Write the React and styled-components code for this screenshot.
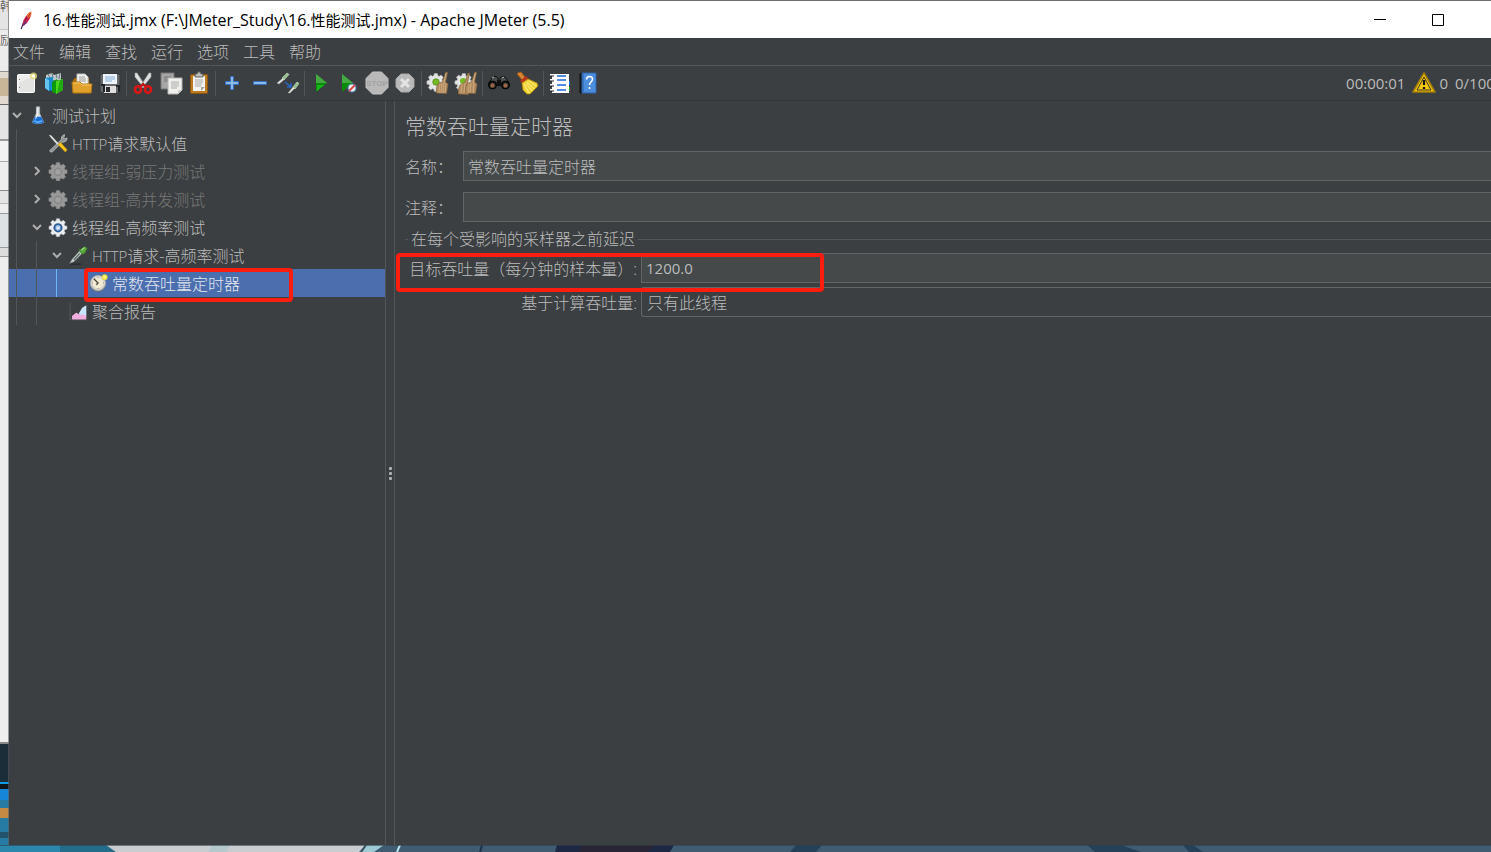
import React, { useState } from 'react';
import styled, { createGlobalStyle } from 'styled-components';

const menus = ['文件', '编辑', '查找', '运行', '选项', '工具', '帮助'];

const treeNodes = [
  { depth: 0, icon: 'flask', label: '测试计划', state: 'open' },
  { depth: 1, icon: 'tools', latin: 'HTTP', label: '请求默认值' },
  { depth: 1, icon: 'gearOff', label: '线程组-弱压力测试', state: 'closed', disabled: true },
  { depth: 1, icon: 'gearOff', label: '线程组-高并发测试', state: 'closed', disabled: true },
  { depth: 1, icon: 'gear', label: '线程组-高频率测试', state: 'open' },
  { depth: 2, icon: 'dropper', latin: 'HTTP', label: '请求-高频率测试', state: 'open' },
  { depth: 3, icon: 'timer', label: '常数吞吐量定时器', marked: true },
  { depth: 2, icon: 'chart', label: '聚合报告' },
];

const toolGroups = [
  [['new', '新建'], ['templates', '模板'], ['open', '打开'], ['save', '保存']],
  [['cut', '剪切'], ['copy', '复制'], ['paste', '粘贴']],
  [['plus', '展开'], ['minus', '折叠'], ['toggle', '切换']],
  [['start', '启动'], ['startNoPause', '不停顿开始'], ['stop', '停止'], ['shutdown', '关闭']],
  [['clear', '清除'], ['clearAll', '清除全部']],
  [['search', '搜索'], ['reset', '重置搜索']],
  [['functions', '函数助手'], ['help', '帮助']],
];

const gearPath =
  'M10.2 2h3.6l.6 2.6 1.7.7 2.3-1.4 2.5 2.5-1.4 2.3.7 1.7 2.6.6v3.6l-2.6.6-.7 1.7 1.4 2.3-2.5 2.5-2.3-1.4-1.7.7-.6 2.6h-3.6l-.6-2.6-1.7-.7-2.3 1.4-2.5-2.5 1.4-2.3-.7-1.7-2.6-.6V11l2.6-.6.7-1.7-1.4-2.3 2.5-2.5 2.3 1.4 1.7-.7z';

const brushPath = 'M19 1l1.6.5-2 9.5 2.4 2-1.5 9.500-10-.5q-1-5 1.500-9l4.500-2.500z';

const drawings = {
  new: (
    <>
      <rect x="3.5" y="3.5" width="17" height="18" rx="1" fill="#eeeeec" stroke="#fff" />
      <path d="M5 12v9h15V5z" fill="#dcdcda" opacity=".6" />
      <path d="M5.5 8v1M5.5 16v1" stroke="#777" />
      <circle cx="19.5" cy="5" r="3.5" fill="#e6d978" opacity=".8" />
      <circle cx="19.5" cy="5" r="1.8" fill="#fffce0" />
    </>
  ),
  templates: (
    <>
      <path d="M4 4l6-2 2 2 7-2v7L4 10z" fill="#bfc9cc" />
      <path d="M6 3l2 4M10 2l1 5M14 3l1 4M18 2l-1 6" stroke="#66777d" />
      <path d="M3 7l8-1v13l-4 1-4-3z" fill="#178bcb" />
      <path d="M3 7l4 2v11l-4-3z" fill="#65c4ef" />
      <path d="M10 11l5-3v15l-5-2z" fill="#0c9a0c" />
      <path d="M14 10l7-2v11l-7 4z" fill="#49d718" />
      <path d="M18 9l3-1v11l-6 3z" fill="#22aa12" />
    </>
  ),
  open: (
    <>
      <path d="M3 9l2-2h14l1 14H4z" fill="#a86c09" />
      <path d="M7 3h8l3 3v8H7z" fill="#f2f2f0" stroke="#c3c3c3" />
      <path d="M9 6h6M9 8h7M9 10h7" stroke="#999" />
      <path d="M2 11h8l2 2h10l-1 9H3z" fill="#e0a12d" stroke="#b67711" />
      <path d="M3 12h7l2 2h9" fill="none" stroke="#f5c868" />
    </>
  ),
  save: (
    <>
      <path d="M3 3h18l1 1v18H4l-2-2V4z" fill="#666a6c" stroke="#32373a" />
      <path d="M5 3h14v10H5z" fill="#edf4fb" />
      <path d="M7 6h10M7 8h10M7 10h7" stroke="#82add8" />
      <path d="M6 15h12v7H6z" fill="#dfdfdf" />
      <path d="M8 16h4v5H8z" fill="#292c2e" />
      <path d="M3 14h3v7M18 15h3v6" fill="none" stroke="#202325" strokeWidth="2" />
    </>
  ),
  cut: (
    <>
      <path d="M4 2h2l9 14-2 1L4 6zM20 2h-2L9 16l2 1 9-11z" fill="#dfe1e1" stroke="#a3a5a5" strokeWidth=".6" />
      <ellipse cx="7" cy="18.5" rx="3" ry="3.2" fill="none" stroke="#dc1515" strokeWidth="2.6" />
      <ellipse cx="17" cy="18.5" rx="3" ry="3.2" fill="none" stroke="#dc1515" strokeWidth="2.6" />
      <path d="M9 16l3-3 3 3" fill="none" stroke="#c51010" strokeWidth="2" />
    </>
  ),
  copy: (
    <>
      <path d="M2 2h13v16H2z" fill="#a5a6a5" stroke="#777" />
      <path d="M5 6h7M5 8h7M5 10h7" stroke="#777" />
      <path d="M9 7h14v12l-4 4H9z" fill="#f0f0ee" stroke="#b4b4b1" />
      <path d="M12 11h8M12 13h8M12 15h8M12 17h6" stroke="#aaa" />
      <path d="M19 23v-4h4z" fill="#cfcfcc" />
    </>
  ),
  paste: (
    <>
      <rect x="3.5" y="3.5" width="17" height="19" rx="1" fill="#bc7b20" stroke="#895510" />
      <path d="M6 5h12v15H6z" fill="#f2f2f0" />
      <path d="M8 9h8M8 11h8M8 13h7M8 15h6" stroke="#aaa" />
      <path d="M14 20l4-4h-4z" fill="#a6a6a3" />
      <path d="M8 3h2l1-2h2l1 2h2v3H8z" fill="#bbbdb8" stroke="#62645f" />
    </>
  ),
  plus: <path d="M10.5 5.5h3v5h5v3h-5v5h-3v-5h-5v-3h5z" fill="#8db9ea" stroke="#3470be" />,
  minus: <path d="M5.5 10.5h13v3h-13z" fill="#8db9ea" stroke="#3470be" />,
  toggle: (
    <>
      <path d="M1 12l6-5 2 1-6 5zM12 22l5-6 2 1-5 5z" fill="#e4e6e4" stroke="#9a9c9a" strokeWidth=".5" />
      <path d="M6 7l5-5 2 1.500-5 5.500zM17 16l4-5 2 1.500-4 5.500z" fill="#93bf8b" stroke="#d1e6ce" strokeWidth=".6" />
      <path d="M9 11l5 4M15 12v4h-4" fill="none" stroke="#2767c3" strokeWidth="1.6" />
    </>
  ),
  start: (
    <>
      <path d="M7 3l11 9-11 9z" fill="#0b8b0b" />
      <path d="M7 3l11 9H7z" fill="#44a943" />
      <path d="M8 14h7l-7 6z" fill="#15b815" />
    </>
  ),
  startNoPause: (
    <>
      <path d="M5 3l11 9-11 9z" fill="#0b8b0b" />
      <path d="M5 3l11 9H5z" fill="#44a943" />
      <circle cx="15" cy="17" r="4" fill="#eee" stroke="#5481b1" strokeWidth="1.2" />
      <path d="M12 20l6-6" stroke="#d64444" strokeWidth="1.8" />
    </>
  ),
  stop: (
    <>
      <path d="M7.5 1h9L23 7.5v9L16.5 23h-9L1 16.5v-9z" fill="#b9b9b9" stroke="#c4c4c4" />
      <text x="12" y="15" textAnchor="middle" fontFamily="Liberation Sans" fontSize="8" fontWeight="700" fill="#a2a2a2">STOP</text>
    </>
  ),
  shutdown: (
    <>
      <path d="M8 3h8l5 5v8l-5 5H8l-5-5V8z" fill="#b9b9b9" stroke="#a9a9a9" />
      <path d="M8 8l8 8M16 8l-8 8" stroke="#e4e4e4" strokeWidth="3" />
    </>
  ),
  clear: (
    <>
      <path d={gearPath} transform="translate(0 1) scale(.82)" fill="#e4e5e5" stroke="#bbb" />
      <circle cx="10" cy="11" r="3.2" fill="#73ba25" stroke="#5c941f" />
      <path d={brushPath} transform="translate(1 0)" fill="#b08a5e" stroke="#86643c" strokeWidth=".6" />
      <path d="M14 13l-1 9M16 12l-1 10M18 12l-1 10M20 13l-1 9M20 2l-2 10" stroke="#d9b98c" strokeWidth=".7" />
    </>
  ),
  clearAll: (
    <>
      <path d={gearPath} transform="translate(0 1) scale(.82)" fill="#e4e5e5" stroke="#bbb" />
      <circle cx="9" cy="10" r="3" fill="#73ba25" />
      <path d={brushPath} transform="translate(-5 1)" fill="#b08a5e" stroke="#86643c" strokeWidth=".6" />
      <path d={brushPath} transform="translate(2 0)" fill="#b08a5e" stroke="#86643c" strokeWidth=".6" />
      <path d="M8 13l-1 9M11 12l-1 10M15 13l-1 9M17 12l-1 10M20 12l-1 10M21 2l-2 10" stroke="#d9b98c" strokeWidth=".7" />
    </>
  ),
  search: (
    <>
      <path d="M5 7l3-2 3 2v5H2zM13 7l3-2 3 2 3 5h-9z" fill="#4c4e4e" stroke="#111" />
      <path d="M10 9h4v6h-4z" fill="#111" />
      <circle cx="5.5" cy="14" r="4" fill="#17191a" stroke="#000" />
      <circle cx="18.5" cy="14" r="4" fill="#17191a" stroke="#000" />
      <circle cx="5.5" cy="14.5" r="2.2" fill="#9a6649" />
      <circle cx="18.5" cy="14.5" r="2.2" fill="#9a6649" />
      <path d="M5 7l2-1M15 7l2-1" stroke="#bbb" />
    </>
  ),
  reset: (
    <>
      <path d="M2 3q1-2 4-2l4 5-3 3z" fill="#d58433" stroke="#9a5313" />
      <path d="M5 10l6-5 3 3-6 5z" fill="#b5341f" />
      <path d="M7 12l6-4 9 4 1 3-8 8h-3l-4-4z" fill="#f0d238" stroke="#b38e08" strokeWidth=".8" />
      <path d="M9 13l5 9M11 12l6 8M12 11l7 7M14 10l7 5" stroke="#fff184" />
    </>
  ),
  functions: (
    <>
      <path d="M4 3h17v19H4z" fill="#fff" />
      <path d="M2 4h5M2 9h5M2 14h5M2 19h5" stroke="#f7f7f7" strokeWidth="2" />
      <path d="M2 5h4M2 10h4M2 15h4M2 20h4" stroke="#222" />
      <path d="M9 5h9M9 9h9M9 14h9M9 19h9" stroke="#1c67d8" strokeWidth="1.4" />
      <path d="M21 10h1v4h-1z" fill="#1b74dc" />
      <path d="M21 16h1v4h-1z" fill="#29a529" />
    </>
  ),
  help: (
    <>
      <path d="M4 3l2-1v20H4z" fill="#101820" stroke="#111" />
      <path d="M6 2h14v20H6z" fill="#4c8ddd" stroke="#2e65aa" />
      <path d="M7 3v18" stroke="#2862a8" />
      <path d="M10.5 8.5c0-4 6-4 6-.5 0 3-3 3-3 6" fill="none" stroke="#fff" strokeWidth="1.5" />
      <circle cx="13.5" cy="17" r="1" fill="#fff" />
    </>
  ),
  flask: (
    <>
      <path d="M10 2h4v8l5 11q-7 3-14 0l5-11z" fill="#d6dcde" stroke="#a9b5bb" strokeWidth=".6" />
      <path d="M8 14h8l3 7q-7 3-14 0z" fill="#176fd4" />
      <path d="M7 19q5 3 10 0" stroke="#5caaf8" strokeWidth="2" fill="none" />
      <path d="M11 4v8l-2 5" stroke="#fff" fill="none" />
    </>
  ),
  tools: (
    <>
      <path d="M2 21L16 8q-1-4 3-6h1l-1 4 1 1 3-1q0 4-4 5h-2L5 23q-3 0-3-2" fill="#8f9495" stroke="#c7cbcc" strokeWidth=".8" />
      <path d="M1 2l3 1 9 10-2 1L3 5z" fill="#ddd" />
      <path d="M12 14l3-3 8 9-2 3z" fill="#f8c51c" stroke="#a97809" strokeWidth=".5" />
    </>
  ),
  gear: (
    <>
      <path d={gearPath} fill="#ecedee" stroke="#aeb4bd" strokeWidth=".7" />
      <circle cx="12" cy="13" r="5.5" fill="#315e97" />
      <path d="M9 11a4 4 0 0 1 6 0v4a4 4 0 0 1-6 0z" fill="#93bce6" />
      <circle cx="12" cy="13" r="2" fill="#dcecf8" />
    </>
  ),
  gearOff: (
    <>
      <path d={gearPath} fill="#989898" stroke="#8b8b8b" />
      <circle cx="12" cy="13" r="5" fill="#858585" />
      <circle cx="12" cy="13" r="3.5" fill="#a1a1a1" />
    </>
  ),
  dropper: (
    <>
      <path d="M3 23h13" stroke="#292d2f" strokeWidth="2" />
      <path d="M2 22l3-5L14 7l3 3L7 20z" fill="#cfd6d2" stroke="#77827c" strokeWidth=".7" />
      <path d="M7 18l7-8" stroke="#59655e" strokeWidth="1.5" />
      <path d="M13 6l3-1 4-3 3 2-3 6-3 1z" fill="#58a83d" stroke="#3c792c" />
      <path d="M16 6l4-3" stroke="#9bdc7c" strokeWidth="1.5" />
    </>
  ),
  timer: (
    <>
      <circle cx="12" cy="13" r="9.5" fill="#74787a" />
      <circle cx="12" cy="12" r="9" fill="#d6d5cf" stroke="#b3b3ae" />
      <circle cx="12" cy="12" r="6.5" fill="#f0ead2" />
      <path d="M7 7l5 5-2 2" stroke="#474738" strokeWidth="1.6" fill="none" />
      <path d="M12 5v1M18 12h1M12 18v1M5 12h1" stroke="#77776c" />
      <circle cx="20" cy="5" r="3.5" fill="#e6da40" />
      <circle cx="20" cy="5" r="2" fill="#fff678" />
    </>
  ),
  chart: (
    <>
      <path d="M2.5 2v20.5h20" stroke="#5d6063" fill="none" />
      <path d="M5 22v-4l5-4 3 2 4-6 4-3v15z" fill="#f1a9d7" />
      <path d="M13 15l4-7 5-3v13l-4 3z" fill="#c9e4fa" />
      <path d="M5 18l5-4 4 4 3-2 5 2v4H5z" fill="#efaedd" />
    </>
  ),
  warning: (
    <>
      <path d="M12 2l11 19H1z" fill="#f2c60d" stroke="#a78109" strokeWidth="1.5" strokeLinejoin="round" />
      <path d="M12 6l7 13H5z" fill="none" stroke="#3d3920" />
      <path d="M12 9v5M12 16v2" stroke="#16130a" strokeWidth="2.2" />
    </>
  ),
  feather: (
    <>
      <path d="M5 23q2-7 5-12" stroke="#4c2f65" strokeWidth="1.5" fill="none" />
      <path d="M7 18q0-7 5-12 3-4 5-4 1 4-2 9-3 5-7 8z" fill="#c92050" />
      <path d="M12 6q3-4 5-4 1 3-1 6l-4 2z" fill="#f17424" />
      <path d="M7 18l2-4 3 1-4 4z" fill="#6e3a8c" />
      <path d="M8 18q2-7 8-14" stroke="#761942" fill="none" strokeWidth=".8" />
    </>
  ),
};

const Icon = ({ name, size = 24 }) => (
  <svg width={size} height={size} viewBox="0 0 24 24" aria-hidden="true">
    {drawings[name]}
  </svg>
);

const Chevron = ({ state }) => (
  <svg width="10" height="10" viewBox="0 0 10 10" aria-hidden="true">
    <path d={state === 'open' ? 'M1 3l4 4 4-4' : 'M3 1l4 4-4 4'} fill="none" stroke="#adadad" strokeWidth="2" />
  </svg>
);

const Wallpaper = () => (
  <WallpaperSvg viewBox="0 0 1491 7" preserveAspectRatio="none" aria-hidden="true">
    <rect width="1491" height="7" fill="#3f5c73" />
    <path d="M0 0h106l10 7H0z" fill="#2b87ab" />
    <path d="M60 0h46l10 7H60z" fill="#246d8a" />
    <path d="M106 0h260l-7 7H116z" fill="#c9cdcf" />
    <path d="M212 0h18l-4 7h-18z" fill="#b5c9cc" />
    <path d="M366 0h18l-10 7h-14z" fill="#9ccbd4" />
    <path d="M366 0l-5 7" stroke="#35505f" strokeWidth="2" />
    <path d="M400 0l-3 7" stroke="#b9e5ec" strokeWidth="2" />
    <path d="M482 0l-2 7" stroke="#1f3348" strokeWidth="2" />
    <path d="M557 0h117l-4 7H555z" fill="#1d2944" />
    <path d="M582 0h75l-10 7h-68z" fill="#292536" />
    <path d="M796 0h26l-6 7h-26zM1087 0h34l20 7h-46zM1183 0h10l10 7h-14z" fill="#25415a" />
    <path d="M0 .5h1491" stroke="#2f3f4a" opacity=".6" />
  </WallpaperSvg>
);

const TreeRow = ({ node, selected, onSelect }) => (
  <Row role="treeitem" aria-selected={selected} $selected={selected} onClick={onSelect}>
    {Array.from({ length: node.depth }, (_, i) => (
      <Guide key={i} $active={selected && i === node.depth - 1} />
    ))}
    <Toggle>{node.state && <Chevron state={node.state} />}</Toggle>
    <Icon name={node.icon} size={20} />
    <NodeLabel $disabled={node.disabled}>
      {node.latin && <Latin>{node.latin}</Latin>}
      {node.label}
    </NodeLabel>
    {node.marked && <NodeMark />}
  </Row>
);

const App = () => {
  const [selected, setSelected] = useState(6);
  const [name, setName] = useState('常数吞吐量定时器');
  const [comment, setComment] = useState('');
  const [throughput, setThroughput] = useState('1200.0');

  return (
    <Desktop>
      <GlobalStyle />
      <Backdrop>
        <BackdropText>韩</BackdropText>
        <BackdropText>励</BackdropText>
      </Backdrop>
      <Window>
        <TitleBar>
          <Icon name="feather" size={20} />
          <WindowTitle>
            16.<Cjk>性能测试</Cjk>.jmx (F:\JMeter_Study\16.<Cjk>性能测试</Cjk>.jmx) - Apache JMeter (5.5)
          </WindowTitle>
          <WindowButton aria-label="最小化">
            <svg width="12" height="12" viewBox="0 0 12 12"><path d="M0 5.5h12" stroke="#000" /></svg>
          </WindowButton>
          <WindowButton aria-label="最大化">
            <svg width="12" height="12" viewBox="0 0 12 12"><path d="M.5.5h11v11H.5z" fill="none" stroke="#000" /></svg>
          </WindowButton>
        </TitleBar>

        <MenuBar>
          {menus.map((menu) => (
            <MenuButton key={menu}>{menu}</MenuButton>
          ))}
        </MenuBar>

        <Toolbar>
          {toolGroups.map((group, index) => (
            <ToolGroup key={index}>
              {group.map(([icon, label]) => (
                <ToolButton key={icon} aria-label={label}>
                  <Icon name={icon} />
                </ToolButton>
              ))}
            </ToolGroup>
          ))}
          <Status>
            <span>00:00:01</span>
            <Icon name="warning" />
            <ErrorCount>0</ErrorCount>
            <ThreadCount>0/100</ThreadCount>
          </Status>
        </Toolbar>

        <Workspace>
          <Tree role="tree">
            {treeNodes.map((node, index) => (
              <TreeRow
                key={index}
                node={node}
                selected={selected === index}
                onSelect={() => setSelected(index)}
              />
            ))}
          </Tree>
          <Splitter>
            <Dot />
            <Dot />
            <Dot />
          </Splitter>
          <Editor>
            <Heading>常数吞吐量定时器</Heading>
            <Field>
              <FieldLabel htmlFor="name">名称：</FieldLabel>
              <TextInput id="name" value={name} onChange={(e) => setName(e.target.value)} />
            </Field>
            <Field>
              <FieldLabel htmlFor="comment">注释：</FieldLabel>
              <TextInput id="comment" value={comment} onChange={(e) => setComment(e.target.value)} />
            </Field>
            <GroupTitle>在每个受影响的采样器之前延迟</GroupTitle>
            <Settings>
              <SettingLabel htmlFor="throughput">目标吞吐量（每分钟的样本量）:</SettingLabel>
              <NumberInput id="throughput" value={throughput} onChange={(e) => setThroughput(e.target.value)} />
              <SettingLabel htmlFor="mode">基于计算吞吐量:</SettingLabel>
              <Select id="mode">
                <option>只有此线程</option>
              </Select>
              <SettingMark />
            </Settings>
          </Editor>
        </Workspace>
      </Window>
      <Wallpaper />
    </Desktop>
  );
};

// Styled Components
const GlobalStyle = createGlobalStyle`
  * {
    box-sizing: border-box;
  }
  body {
    margin: 0;
    overflow: hidden;
    font-family: 'Open Sans', 'Noto Sans CJK SC', sans-serif;
    font-size: 16px;
    font-weight: 300;
    color: #bbbbbb;
  }
  button, input, select {
    font: inherit;
    color: inherit;
  }
  svg {
    display: block;
    flex-shrink: 0;
  }
`;

const Desktop = styled.div`
  display: grid;
  grid-template-columns: 9px minmax(0, 1fr);
  grid-template-rows: minmax(0, 1fr) 7px;
  height: 100vh;
`;

const Backdrop = styled.div`
  display: flex;
  flex-direction: column;
  gap: 20px;
  overflow: hidden;
  border-right: 1px solid rgba(90, 94, 98, 0.6);
  background: linear-gradient(
    #e4e4e4 0 29px, #c5c5c5 29px 30px, #ececec 30px 71px, #8f8f8f 71px 72px,
    #e0dad0 72px 78px, #c9b698 78px 96px, #e0dad0 96px 104px, #666 104px 105px,
    #e4e4e4 105px 139px, #999 139px 141px, #f2f2f2 141px 161px, #aaa 161px 162px,
    #eee 162px 190px, #888 190px 191px, #e4e4e4 191px 203px, #bbb 203px 204px,
    #eee 204px 213px, #999 213px 214px, #dde3e4 214px 247px, #999 247px 248px,
    #ddd 248px 256px, #999 256px 257px, #eeeeee 257px 742px, #888 742px 744px,
    #1c2d3a 744px 782px, #0d9ce5 782px 784px, #10161c 784px 789px, #1687d8 789px 800px,
    #267ba5 800px 808px, #c58a43 808px 818px, #267ba5 818px 832px, #23536b 832px 838px, #267ba5 838px 100%
  );
`;

const BackdropText = styled.span`
  font-size: 12px;
  line-height: 14px;
  color: #333;
`;

const WallpaperSvg = styled.svg`
  grid-column: 1 / -1;
  width: 100%;
  height: 7px;
`;

const Window = styled.main`
  display: flex;
  flex-direction: column;
  border-top: 1px solid #6e6e6e;
  background: #3c3f41;
`;

const TitleBar = styled.header`
  display: flex;
  align-items: center;
  height: 37px;
  padding: 0 24px 0 8px;
  background: #fff;
  color: #000;
`;

const WindowTitle = styled.h1`
  flex: 1;
  margin: 0 0 0 6px;
  font-size: 16px;
  font-weight: 400;
  line-height: 20px;
  white-space: nowrap;
`;

const Cjk = styled.span`
  font-size: 15px;
`;

const Latin = styled.span`
  font-size: 15px;
`;

const WindowButton = styled.button`
  display: grid;
  place-items: center;
  width: 58px;
  height: 36px;
  padding: 0;
  border: 0;
  background: none;
`;

const MenuBar = styled.nav`
  display: flex;
  gap: 14px;
  height: 28px;
  padding: 0 4px;
  border-bottom: 1px solid #515658;
`;

const MenuButton = styled.button`
  padding: 0;
  border: 0;
  background: none;
  line-height: 26px;
`;

const Toolbar = styled.div`
  display: flex;
  align-items: center;
  height: 35px;
  padding-left: 3px;
  border-bottom: 1px solid #323537;
`;

const ToolGroup = styled.div`
  display: flex;
  align-items: center;

  & + &::before {
    content: '';
    width: 1px;
    height: 25px;
    margin: 0 2px;
    background: #515658;
  }
`;

const ToolButton = styled.button`
  display: grid;
  place-items: center;
  width: 28px;
  height: 28px;
  padding: 0;
  border: 0;
  background: none;
`;

const Status = styled.div`
  display: flex;
  align-items: center;
  margin-left: auto;
  gap: 7px;
  font-size: 15px;
  font-weight: 400;
  line-height: 20px;
`;

const ErrorCount = styled.span`
  margin-left: -4px;
`;

const ThreadCount = styled.span`
  width: 36px;
  overflow: hidden;
`;

const Workspace = styled.div`
  display: flex;
  flex: 1;
  min-height: 0;
`;

const Tree = styled.div`
  width: 376px;
  flex-shrink: 0;
`;

const Row = styled.div`
  position: relative;
  display: flex;
  align-items: center;
  height: 28px;
  background: ${(props) => (props.$selected ? '#4b6eaf' : 'transparent')};
`;

const Guide = styled.span`
  align-self: stretch;
  width: 13px;
  margin-left: 7px;
  border-left: 1px solid ${(props) => (props.$active ? '#6cb8f5' : '#515658')};
`;

const Toggle = styled.span`
  display: grid;
  place-items: center;
  width: 16px;
  margin-right: 3px;
`;

const NodeLabel = styled.span`
  padding-top: 2px;
  margin-left: 4px;
  line-height: 26px;
  color: ${(props) => (props.$disabled ? '#777777' : '#bbbbbb')};

  [aria-selected='true'] & {
    color: #e2e6ee;
  }
`;

const Mark = styled.span`
  position: absolute;
  border: 4px solid #fb1d10;
  border-radius: 4px;
  pointer-events: none;
`;

const NodeMark = styled(Mark)`
  top: -1px;
  left: 75px;
  width: 209px;
  height: 34px;
  z-index: 1;
`;

const SettingMark = styled(Mark)`
  top: 0;
  left: -9px;
  width: 428px;
  height: 39px;
`;

const Splitter = styled.div`
  display: flex;
  flex-direction: column;
  align-items: center;
  justify-content: center;
  gap: 2px;
  width: 10px;
  border: solid #515658;
  border-width: 0 1px;
`;

const Dot = styled.span`
  width: 3px;
  height: 3px;
  border-radius: 1px;
  background: #afb1b3;
`;

const Editor = styled.section`
  flex: 1;
  min-width: 0;
  padding: 8px 0 0 10px;
`;

const Heading = styled.h2`
  margin: 0 0 8px;
  font-size: 21px;
  font-weight: 300;
  line-height: 34px;
`;

const Field = styled.div`
  display: flex;
  align-items: center;
  margin-bottom: 11px;
`;

const FieldLabel = styled.label`
  width: 58px;
  padding-top: 2px;
  line-height: 28px;
`;

const TextInput = styled.input`
  flex: 1;
  min-width: 0;
  height: 30px;
  padding: 0 4px;
  border: 1px solid #646464;
  border-right: 0;
  border-radius: 0;
  outline: none;
  background: #45494a;
`;

const GroupTitle = styled.div`
  display: flex;
  align-items: center;
  gap: 3px;
  margin: -4px 0 4px;
  line-height: 20px;

  &::before,
  &::after {
    content: '';
    width: 3px;
    height: 1px;
    background: #515658;
  }

  &::after {
    flex: 1;
  }
`;

const Settings = styled.div`
  position: relative;
  display: grid;
  grid-template-columns: 232px minmax(0, 1fr);
  gap: 4px;
`;

const SettingLabel = styled.label`
  padding-top: 2px;
  text-align: right;
  line-height: 28px;
`;

const NumberInput = styled(TextInput)`
  font-size: 15px;
  font-weight: 400;
`;

const Select = styled.select`
  height: 30px;
  padding: 2px 5px 0;
  border: 1px solid #646464;
  border-right: 0;
  border-radius: 3px 0 0 3px;
  outline: none;
  appearance: none;
  background: #3c3f41;
`;

export default App;
